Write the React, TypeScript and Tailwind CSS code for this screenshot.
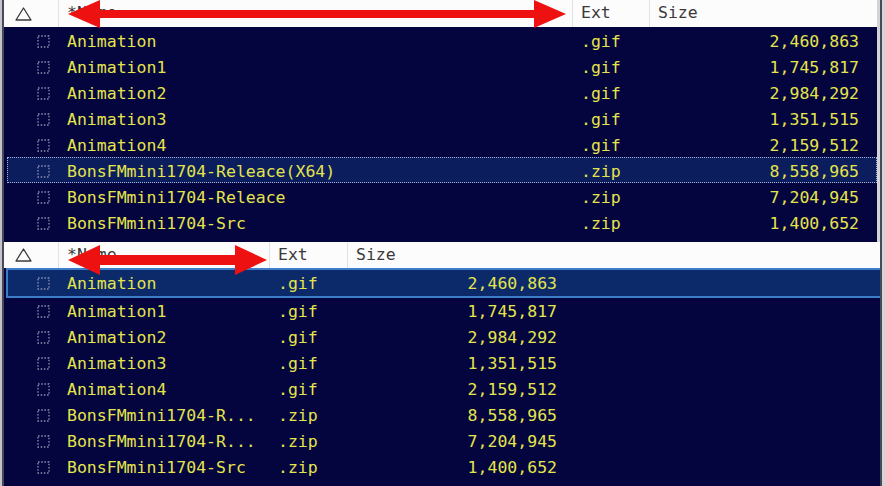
import React from 'react'

type Row = { name: string; short: string; ext: string; size: string }

const rows: Row[] = [
  { name: 'Animation', short: 'Animation', ext: '.gif', size: '2,460,863' },
  { name: 'Animation1', short: 'Animation1', ext: '.gif', size: '1,745,817' },
  { name: 'Animation2', short: 'Animation2', ext: '.gif', size: '2,984,292' },
  { name: 'Animation3', short: 'Animation3', ext: '.gif', size: '1,351,515' },
  { name: 'Animation4', short: 'Animation4', ext: '.gif', size: '2,159,512' },
  { name: 'BonsFMmini1704-Releace(X64)', short: 'BonsFMmini1704-R...', ext: '.zip', size: '8,558,965' },
  { name: 'BonsFMmini1704-Releace', short: 'BonsFMmini1704-R...', ext: '.zip', size: '7,204,945' },
  { name: 'BonsFMmini1704-Src', short: 'BonsFMmini1704-Src', ext: '.zip', size: '1,400,652' },
]

const FileIcon = () => (
  <svg width="13" height="13" viewBox="0 0 13 13" className="shrink-0">
    <rect x="1" y="1" width="11" height="11" fill="none" stroke="#9090b0" strokeWidth="1.3" strokeDasharray="1.5 1.7" />
  </svg>
)

const SortIcon = () => (
  <svg width="17" height="14" viewBox="0 0 17 14">
    <polygon points="8.5,1 16,13 1,13" fill="none" stroke="#3a3a3a" strokeWidth="1.3" strokeLinejoin="round" />
  </svg>
)

// double headed red arrow drawn over the header
const Arrow = ({ x1, x2, y, head = 32, half = 14, shaft = 5 }: { x1: number; x2: number; y: number; head?: number; half?: number; shaft?: number }) => (
  <svg className="pointer-events-none absolute left-0 top-0" width="885" height="486">
    <polygon
      fill="#ee1111"
      points={[
        `${x1},${y}`,
        `${x1 + head},${y - half}`,
        `${x1 + head},${y - shaft}`,
        `${x2 - head},${y - shaft}`,
        `${x2 - head},${y - half}`,
        `${x2},${y}`,
        `${x2 - head},${y + half}`,
        `${x2 - head},${y + shaft}`,
        `${x1 + head},${y + shaft}`,
        `${x1 + head},${y + half}`,
      ].join(' ')}
    />
  </svg>
)

const TopPanel = () => (
  <div className="flex h-[242px]">
    <div className="flex flex-1 flex-col">
      <div className="grid h-[27px] shrink-0 grid-cols-[55px_514px_77px_1fr] items-center bg-[#fcfcfc] text-[#3a3a3a]">
        <div className="flex h-full items-center border-r border-[#e2e2e2] pl-[11px]">
          <SortIcon />
        </div>
        <div className="flex h-full items-center border-r border-[#e2e2e2] pl-2">*Name</div>
        <div className="flex h-full items-center border-r border-[#e2e2e2] pl-2">Ext</div>
        <div className="pl-2">Size</div>
      </div>
      <div className="flex-1 bg-[#04043f]">
        {rows.map((r, i) => (
          <div
            key={r.name}
            className={
              'grid h-[26px] items-center pt-[5px] text-[#e4e44c] ' +
              (i === 5
                ? 'ml-[3px] grid-cols-[51px_514px_77px_1fr] border border-dotted border-[#a8b4d8] bg-[#0b1d5c]'
                : 'grid-cols-[55px_514px_77px_1fr]')
            }
          >
            <div className="flex justify-end pr-[9px] pb-[3px]">
              <FileIcon />
            </div>
            <div className="whitespace-nowrap pl-2">{r.name}</div>
            <div className="pl-2">{r.ext}</div>
            <div className={'text-right ' + (i === 5 ? 'pr-[17px]' : 'pr-[18px]')}>{r.size}</div>
          </div>
        ))}
      </div>
    </div>
    <div className="w-[3px] bg-[#d4d4d8]" />
  </div>
)

const BottomPanel = () => (
  <div className="flex flex-1 flex-col">
    <div className="grid h-[26px] shrink-0 grid-cols-[55px_211px_78px_1fr] items-center bg-[#fcfcfc] text-[#3a3a3a]">
      <div className="flex h-full items-center border-r border-[#e2e2e2] pl-[11px]">
        <SortIcon />
      </div>
      <div className="flex h-full items-center border-r border-[#e2e2e2] pl-2">*Name</div>
      <div className="flex h-full items-center border-r border-[#e2e2e2] pl-2">Ext</div>
      <div className="pl-2">Size</div>
    </div>
    <div className="flex-1 bg-[#04043f]">
      {rows.map((r, i) => (
        <div
          key={r.name}
          className={
            'grid items-center pt-[3px] text-[#e4e44c] ' +
            (i === 0
              ? 'ml-[2px] h-[30px] grid-cols-[51px_211px_78px_222px_1fr] border-y-2 border-l-2 border-[#3c7cc8] bg-[#0c2a6a]'
              : 'h-[26px] grid-cols-[55px_211px_78px_222px_1fr]')
          }
        >
          <div className="flex justify-end pr-[9px] pb-[3px]">
            <FileIcon />
          </div>
          <div className="whitespace-nowrap pl-2">{r.short}</div>
          <div className="pl-2">{r.ext}</div>
          <div className="pr-[13px] text-right">{r.size}</div>
          <div />
        </div>
      ))}
    </div>
  </div>
)

export default function App() {
  return (
    <div
      className="relative flex h-[486px] w-[885px] overflow-hidden bg-[#d4d4d8] text-[16.5px] leading-none"
      style={{ fontFamily: '"DejaVu Sans Mono", "Liberation Mono", monospace' }}
    >
      <div className="w-[2px] bg-[#c4c4cc]" />
      <div className="w-[2px] bg-[#4a4a56]" />
      <div className="flex flex-1 flex-col">
        <TopPanel />
        <BottomPanel />
      </div>
      <div className="w-[2px] bg-[#4a4a56]" />
      <div className="w-[3px] bg-[#d4d4d8]" />

      <Arrow x1={68} x2={566} y={14} head={32} half={14} shaft={4} />
      <Arrow x1={68} x2={267} y={260} head={32} half={15} shaft={5} />
    </div>
  )
}
